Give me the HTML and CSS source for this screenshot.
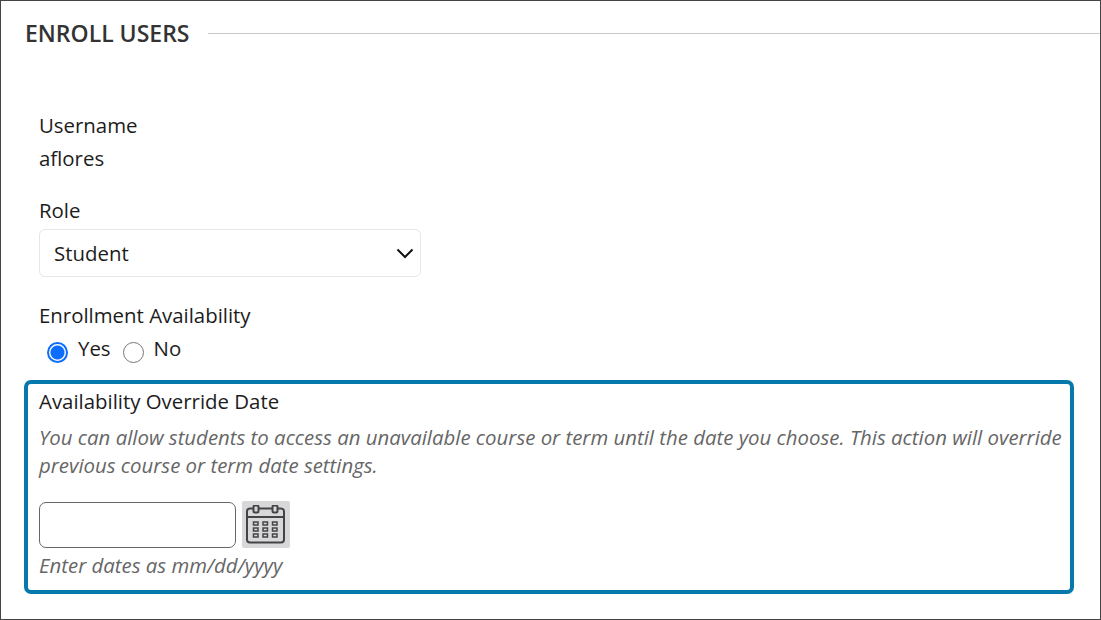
FILE: index.html
```html
<!DOCTYPE html>
<html lang="en">
<head>
<meta charset="utf-8">
<title>Enroll Users</title>
<link rel="stylesheet" href="styles.css">
</head>
<body>
<main class="frame">
  <header class="section-head">
    <h1 class="section-title">ENROLL USERS</h1>
    <div class="section-rule"></div>
  </header>
  <div class="form">
    <div class="field field-username">
      <div class="label">Username</div>
      <div class="value">aflores</div>
    </div>
    <div class="field field-role">
      <div class="label">Role</div>
      <div class="select">
        <span>Student</span>
        <svg class="chevron" width="18" height="11" viewBox="0 0 18 11"><path d="M1.5 1.5 9 9l7.500-7.500" fill="none" stroke="#111" stroke-width="2"/></svg>
      </div>
    </div>
    <div class="field field-avail">
      <div class="label">Enrollment Availability</div>
      <div class="radios">
        <span class="radio radio-on"></span><span class="radio-text">Yes</span>
        <span class="radio"></span><span class="radio-text">No</span>
      </div>
    </div>
  </div>
  <section class="override">
    <div class="label">Availability Override Date</div>
    <p class="hint">You can allow students to access an unavailable course or term until the date you choose. This action will override previous course or term date settings.</p>
    <div class="date-row">
      <div class="date-input"></div>
      <div class="cal-btn">
        <svg width="40" height="40" viewBox="0 0 40 40" fill="none" stroke="#444" stroke-width="2">
          <rect x="1" y="3.500" width="37" height="34" rx="3"/>
          <path d="M1 12h37"/>
          <rect x="7.500" y="0.500" width="5" height="7" rx="1.500" fill="#d8d8da"/>
          <rect x="26.500" y="0.500" width="5" height="7" rx="1.500" fill="#d8d8da"/>
          <g stroke-width="1.500">
            <rect x="7.500" y="17" width="4.500" height="3"/><rect x="17" y="17" width="4.500" height="3"/><rect x="26.500" y="17" width="4.500" height="3"/>
            <rect x="7.500" y="23" width="4.500" height="3"/><rect x="17" y="23" width="4.500" height="3"/><rect x="26.500" y="23" width="4.500" height="3"/>
            <rect x="7.500" y="29" width="4.500" height="3"/><rect x="17" y="29" width="4.500" height="3"/><rect x="26.500" y="29" width="4.500" height="3"/>
          </g>
        </svg>
      </div>
    </div>
    <div class="hint date-hint">Enter dates as mm/dd/yyyy</div>
  </section>
</main>
</body>
</html>
```
FILE: styles.css
```css
* { box-sizing: border-box; }
html, body { margin: 0; padding: 0; background: #fff; }
body { font-family: "Open Sans", "Liberation Sans", sans-serif; color: #1c1c1c; }
.frame {
  width: 1101px;
  height: 620px;
  border: 1px solid #444;
  overflow: hidden;
  padding-top: 16px;
}
.section-head { display: flex; align-items: center; padding-left: 24px; height: 32px; }
.section-title { margin: 0; font-size: 23px; font-weight: 600; line-height: 32px; color: #333; white-space: nowrap; }
.section-rule { flex: 1; height: 1px; margin-left: 18px; background: #c9c9c9; }
.form { padding: 60px 0 0 38px; }
.label, .value { font-size: 20.400px; line-height: 33px; height: 33px; white-space: nowrap; }
.field-role { margin-top: 19px; }
.select {
  display: flex;
  align-items: center;
  justify-content: space-between;
  width: 382px;
  height: 48px;
  margin-top: 2px;
  padding: 0 6px 0 14px;
  border: 1px solid #e6e6e6;
  border-radius: 6px;
  font-size: 20.400px;
}
.field-avail { margin-top: 22px; }
.radios { display: flex; align-items: center; height: 33px; margin-top: 2px; padding-left: 8px; font-size: 20.400px; }
.radio {
  width: 21px;
  height: 21px;
  margin-top: 4px;
  border: 1.500px solid #777;
  border-radius: 50%;
  background: #fff;
}
.radio-on { border: 2px solid #0d6efd; background: radial-gradient(circle, #0d6efd 0 6.500px, #fff 7.500px); }
.radio-text { margin: -6px 12px 0 10px; }
.override {
  width: 1050px;
  height: 214px;
  margin: 13px 0 0 23px;
  padding: 1px 0 0 11px;
  border: 4px solid #0678ab;
  border-radius: 7px;
}
.hint { margin: 0; font-size: 20.400px; font-style: italic; line-height: 28px; color: #666; }
.override .hint { margin-top: 5px; }
.date-row { display: flex; align-items: center; gap: 6px; margin-top: 22px; }
.date-input { width: 197px; height: 46px; border: 1px solid #666; border-radius: 7px; }
.cal-btn {
  display: flex;
  align-items: center;
  justify-content: center;
  width: 48px;
  height: 47px;
  border-radius: 2px;
  background: #d8d8da;
}
.override .date-hint { margin-top: 1px; line-height: 32px; }
```
